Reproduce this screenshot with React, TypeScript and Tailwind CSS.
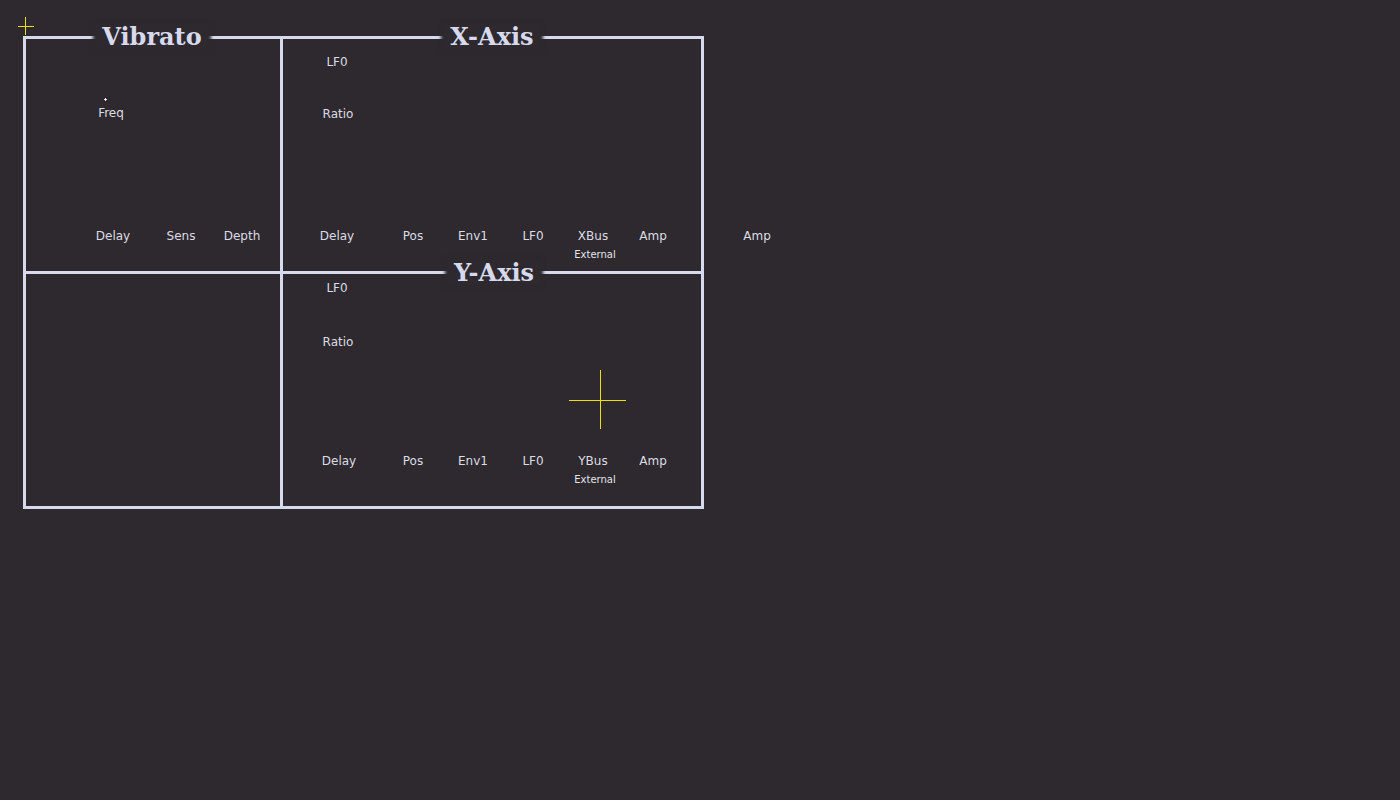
const LINE = "border-[#d6daec]";

function Crosshair({ w, h, vx, hy, className }: { w: number; h: number; vx: number; hy: number; className?: string }) {
  return (
    <svg width={w} height={h} className={className} shapeRendering="crispEdges">
      <line x1={0} y1={hy + 0.5} x2={w} y2={hy + 0.5} stroke="#f0e000" strokeWidth={1} />
      <line x1={vx + 0.5} y1={0} x2={vx + 0.5} y2={h} stroke="#f0e000" strokeWidth={1} />
    </svg>
  );
}

function Title({ text, shift = 0, top = -14 }: { text: string; shift?: number; top?: number }) {
  return (
    <div className="absolute left-0 right-0 flex justify-center" style={{ top, marginLeft: shift * 2 }}>
      <span className="bg-[#2d292e] px-[6px] text-[24px] font-bold leading-[24px] text-[#d6daec] shadow-[0_0_3px_3px_#2d292e] [font-family:'DejaVu_Serif',serif]">
        {text}
      </span>
    </div>
  );
}

function Label({ text, sub, className = "" }: { text: string; sub?: string; className?: string }) {
  return (
    <div className={"flex w-[60px] shrink-0 flex-col items-center " + className}>
      <span className="text-[12px] leading-[14px] text-[#dcdce4]">{text}</span>
      {sub && <span className="ml-[4px] mt-[6px] text-[10px] leading-[12px] text-[#e4e4ec]">{sub}</span>}
    </div>
  );
}

function AxisRow({ bus, first }: { bus: string; first: number }) {
  return (
    <div className="flex" style={{ paddingLeft: first }}>
      <Label text="Delay" />
      <div className="flex" style={{ marginLeft: 40 - first }}>
        <Label text="Pos" />
        <Label text="Env1" />
        <Label text="LF0" />
        <Label text={bus} sub="External" />
        <Label text="Amp" />
      </div>
    </div>
  );
}

export default function App() {
  return (
    <div className="relative h-[800px] w-full bg-[#2d292e] pl-[23px] pt-[36px] [font-family:'DejaVu_Sans',sans-serif]">
      <Crosshair w={16} h={18} vx={7} hy={9} className="absolute left-[18px] top-[17px]" />
      <div className="flex">
        <div className={"h-[473px] w-[681px] shrink-0 border-[3px] " + LINE}>
          <div className="grid h-full grid-cols-[257px_1fr] grid-rows-[235px_1fr]">
            {/* Vibrato */}
            <div className={"relative flex flex-col border-b-[3px] border-r-[3px] pt-[59px] " + LINE}>
              <Title text="Vibrato" shift={-1} />
              <svg width={3} height={3} className="ml-[78px]" shapeRendering="crispEdges">
                <rect x={1} y={0} width={1} height={3} fill="#f4f4f8" />
                <rect x={0} y={1} width={3} height={1} fill="#f4f4f8" />
              </svg>
              <Label text="Freq" className="ml-[55px] mt-[5px]" />
              <div className="mt-[109px] flex">
                <Label text="Delay" className="ml-[57px]" />
                <Label text="Sens" className="ml-[8px]" />
                <Label text="Depth" className="ml-[1px]" />
              </div>
            </div>

            {/* X-Axis */}
            <div className={"relative flex flex-col border-b-[3px] pt-[16px] " + LINE}>
              <Title text="X-Axis" />
              <Label text="LF0" className="ml-[24px]" />
              <Label text="Ratio" className="ml-[25px] mt-[38px]" />
              <div className="mt-[108px]">
                <AxisRow bus="XBus" first={24} />
              </div>
            </div>

            {/* empty */}
            <div className={"border-r-[3px] " + LINE} />

            {/* Y-Axis */}
            <div className="relative flex flex-col pt-[7px]">
              <Title text="Y-Axis" shift={2} top={-13} />
              <Label text="LF0" className="ml-[24px]" />
              <Label text="Ratio" className="ml-[25px] mt-[40px]" />
              <Crosshair w={57} h={59} vx={31} hy={30} className="ml-[286px] mt-[21px]" />
              <div className="mt-[25px]">
                <AxisRow bus="YBus" first={26} />
              </div>
            </div>
          </div>
        </div>
        <Label text="Amp" className="ml-[23px] mt-[193px]" />
      </div>
    </div>
  );
}
